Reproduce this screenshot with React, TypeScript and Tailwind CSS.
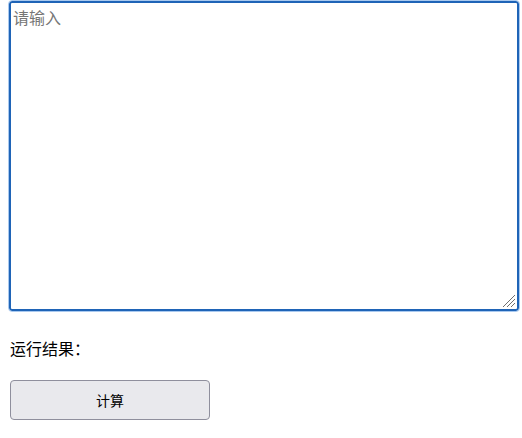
export default function App() {
  return (
    <div
      className="pl-[10px] pt-px bg-white min-h-screen"
      style={{ fontFamily: '"Noto Sans CJK SC", "Noto Sans", sans-serif' }}
    >
      <div className="relative -ml-px w-[510px] h-[310px]">
        <textarea
          placeholder="请输入"
          className="block w-full h-full resize-none border-2 border-[#1f64b7] rounded-[3px] outline outline-1 outline-[#a9c9ef] p-[2px] text-base text-black placeholder:text-[#767676] bg-white"
        />
        {/* resize grip */}
        <svg
          className="absolute right-[3px] bottom-[3px] pointer-events-none"
          width="14"
          height="14"
          viewBox="0 0 14 14"
        >
          <g stroke="#6f6f6f" strokeWidth="1">
            <line x1="13" y1="1" x2="1" y2="13" />
            <line x1="13" y1="5" x2="5" y2="13" />
            <line x1="13" y1="9" x2="9" y2="13" />
          </g>
        </svg>
      </div>
      <p className="mt-[25px] text-base leading-[24px] text-black">运行结果：</p>
      <button className="mt-[20px] w-[200px] h-[40px] rounded-[4px] border border-[#8f8f9d] bg-[#e9e9ed] text-sm text-black">
        计算
      </button>
    </div>
  );
}
